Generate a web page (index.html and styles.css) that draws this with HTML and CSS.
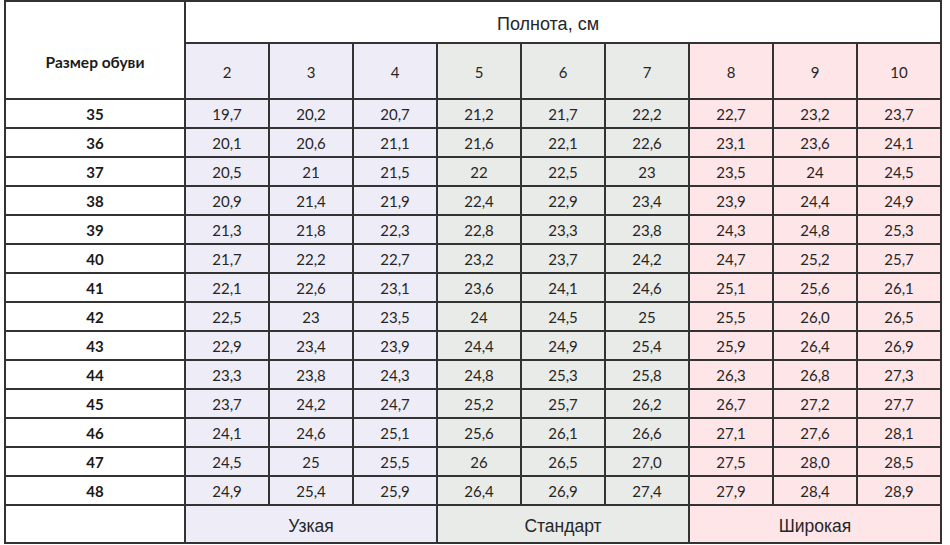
FILE: index.html
```html
<!DOCTYPE html>
<html lang="ru">
<head>
<meta charset="utf-8">
<title>Таблица полноты обуви</title>
<link rel="stylesheet" href="styles.css">
</head>
<body>
<div class="chart">
  <div class="cell corner">Размер обуви</div>
  <div class="cell title">Полнота, см</div>
  <div class="cell n h">2</div><div class="cell n h">3</div><div class="cell n h">4</div>
  <div class="cell s h">5</div><div class="cell s h">6</div><div class="cell s h">7</div>
  <div class="cell w h">8</div><div class="cell w h">9</div><div class="cell w h">10</div>

  <div class="cell size">35</div><div class="cell n">19,7</div><div class="cell n">20,2</div><div class="cell n">20,7</div><div class="cell s">21,2</div><div class="cell s">21,7</div><div class="cell s">22,2</div><div class="cell w">22,7</div><div class="cell w">23,2</div><div class="cell w">23,7</div>
  <div class="cell size">36</div><div class="cell n">20,1</div><div class="cell n">20,6</div><div class="cell n">21,1</div><div class="cell s">21,6</div><div class="cell s">22,1</div><div class="cell s">22,6</div><div class="cell w">23,1</div><div class="cell w">23,6</div><div class="cell w">24,1</div>
  <div class="cell size">37</div><div class="cell n">20,5</div><div class="cell n">21</div><div class="cell n">21,5</div><div class="cell s">22</div><div class="cell s">22,5</div><div class="cell s">23</div><div class="cell w">23,5</div><div class="cell w">24</div><div class="cell w">24,5</div>
  <div class="cell size">38</div><div class="cell n">20,9</div><div class="cell n">21,4</div><div class="cell n">21,9</div><div class="cell s">22,4</div><div class="cell s">22,9</div><div class="cell s">23,4</div><div class="cell w">23,9</div><div class="cell w">24,4</div><div class="cell w">24,9</div>
  <div class="cell size">39</div><div class="cell n">21,3</div><div class="cell n">21,8</div><div class="cell n">22,3</div><div class="cell s">22,8</div><div class="cell s">23,3</div><div class="cell s">23,8</div><div class="cell w">24,3</div><div class="cell w">24,8</div><div class="cell w">25,3</div>
  <div class="cell size">40</div><div class="cell n">21,7</div><div class="cell n">22,2</div><div class="cell n">22,7</div><div class="cell s">23,2</div><div class="cell s">23,7</div><div class="cell s">24,2</div><div class="cell w">24,7</div><div class="cell w">25,2</div><div class="cell w">25,7</div>
  <div class="cell size">41</div><div class="cell n">22,1</div><div class="cell n">22,6</div><div class="cell n">23,1</div><div class="cell s">23,6</div><div class="cell s">24,1</div><div class="cell s">24,6</div><div class="cell w">25,1</div><div class="cell w">25,6</div><div class="cell w">26,1</div>
  <div class="cell size">42</div><div class="cell n">22,5</div><div class="cell n">23</div><div class="cell n">23,5</div><div class="cell s">24</div><div class="cell s">24,5</div><div class="cell s">25</div><div class="cell w">25,5</div><div class="cell w">26,0</div><div class="cell w">26,5</div>
  <div class="cell size">43</div><div class="cell n">22,9</div><div class="cell n">23,4</div><div class="cell n">23,9</div><div class="cell s">24,4</div><div class="cell s">24,9</div><div class="cell s">25,4</div><div class="cell w">25,9</div><div class="cell w">26,4</div><div class="cell w">26,9</div>
  <div class="cell size">44</div><div class="cell n">23,3</div><div class="cell n">23,8</div><div class="cell n">24,3</div><div class="cell s">24,8</div><div class="cell s">25,3</div><div class="cell s">25,8</div><div class="cell w">26,3</div><div class="cell w">26,8</div><div class="cell w">27,3</div>
  <div class="cell size">45</div><div class="cell n">23,7</div><div class="cell n">24,2</div><div class="cell n">24,7</div><div class="cell s">25,2</div><div class="cell s">25,7</div><div class="cell s">26,2</div><div class="cell w">26,7</div><div class="cell w">27,2</div><div class="cell w">27,7</div>
  <div class="cell size">46</div><div class="cell n">24,1</div><div class="cell n">24,6</div><div class="cell n">25,1</div><div class="cell s">25,6</div><div class="cell s">26,1</div><div class="cell s">26,6</div><div class="cell w">27,1</div><div class="cell w">27,6</div><div class="cell w">28,1</div>
  <div class="cell size">47</div><div class="cell n">24,5</div><div class="cell n">25</div><div class="cell n">25,5</div><div class="cell s">26</div><div class="cell s">26,5</div><div class="cell s">27,0</div><div class="cell w">27,5</div><div class="cell w">28,0</div><div class="cell w">28,5</div>
  <div class="cell size">48</div><div class="cell n">24,9</div><div class="cell n">25,4</div><div class="cell n">25,9</div><div class="cell s">26,4</div><div class="cell s">26,9</div><div class="cell s">27,4</div><div class="cell w">27,9</div><div class="cell w">28,4</div><div class="cell w">28,9</div>

  <div class="cell blank"></div>
  <div class="cell n group">Узкая</div>
  <div class="cell s group">Стандарт</div>
  <div class="cell w group">Широкая</div>
</div>
</body>
</html>
```

FILE: styles.css
```css
html, body {
  margin: 0;
  padding: 0;
  background: #ffffff;
}

.chart {
  display: grid;
  grid-template-columns: 178px repeat(9, 82px);
  grid-template-rows: 40px 54px repeat(14, 27px) 36px;
  gap: 2px;
  padding: 2px;
  width: max-content;
  margin-left: 4px;
  background: #333333;
  font-family: "Lato", "Open Sans", sans-serif;
  font-size: 15px;
  color: #262626;
}

.cell {
  display: flex;
  align-items: center;
  justify-content: center;
  padding-top: 2px;
  background: #ffffff;
  line-height: 1;
}

.corner {
  grid-row: 1 / span 2;
  padding-top: 26px;
  font-weight: 700;
  font-size: 15.5px;
  color: #1a1a1a;
}

.title {
  grid-column: 2 / span 9;
  padding-top: 3px;
  padding-right: 30px;
  font-family: "Liberation Sans", Arial, sans-serif;
  font-size: 18px;
  color: #262626;
}

.size {
  font-weight: 700;
  color: #1a1a1a;
}

.n { background: #eeedf7; }
.s { background: #e8ebe8; }
.w { background: #fde5e8; }

.h { padding-top: 2px; }

.group {
  grid-column: span 3;
  padding-top: 5px;
  font-family: "Liberation Sans", Arial, sans-serif;
  font-size: 17.5px;
  color: #262626;
}
```
